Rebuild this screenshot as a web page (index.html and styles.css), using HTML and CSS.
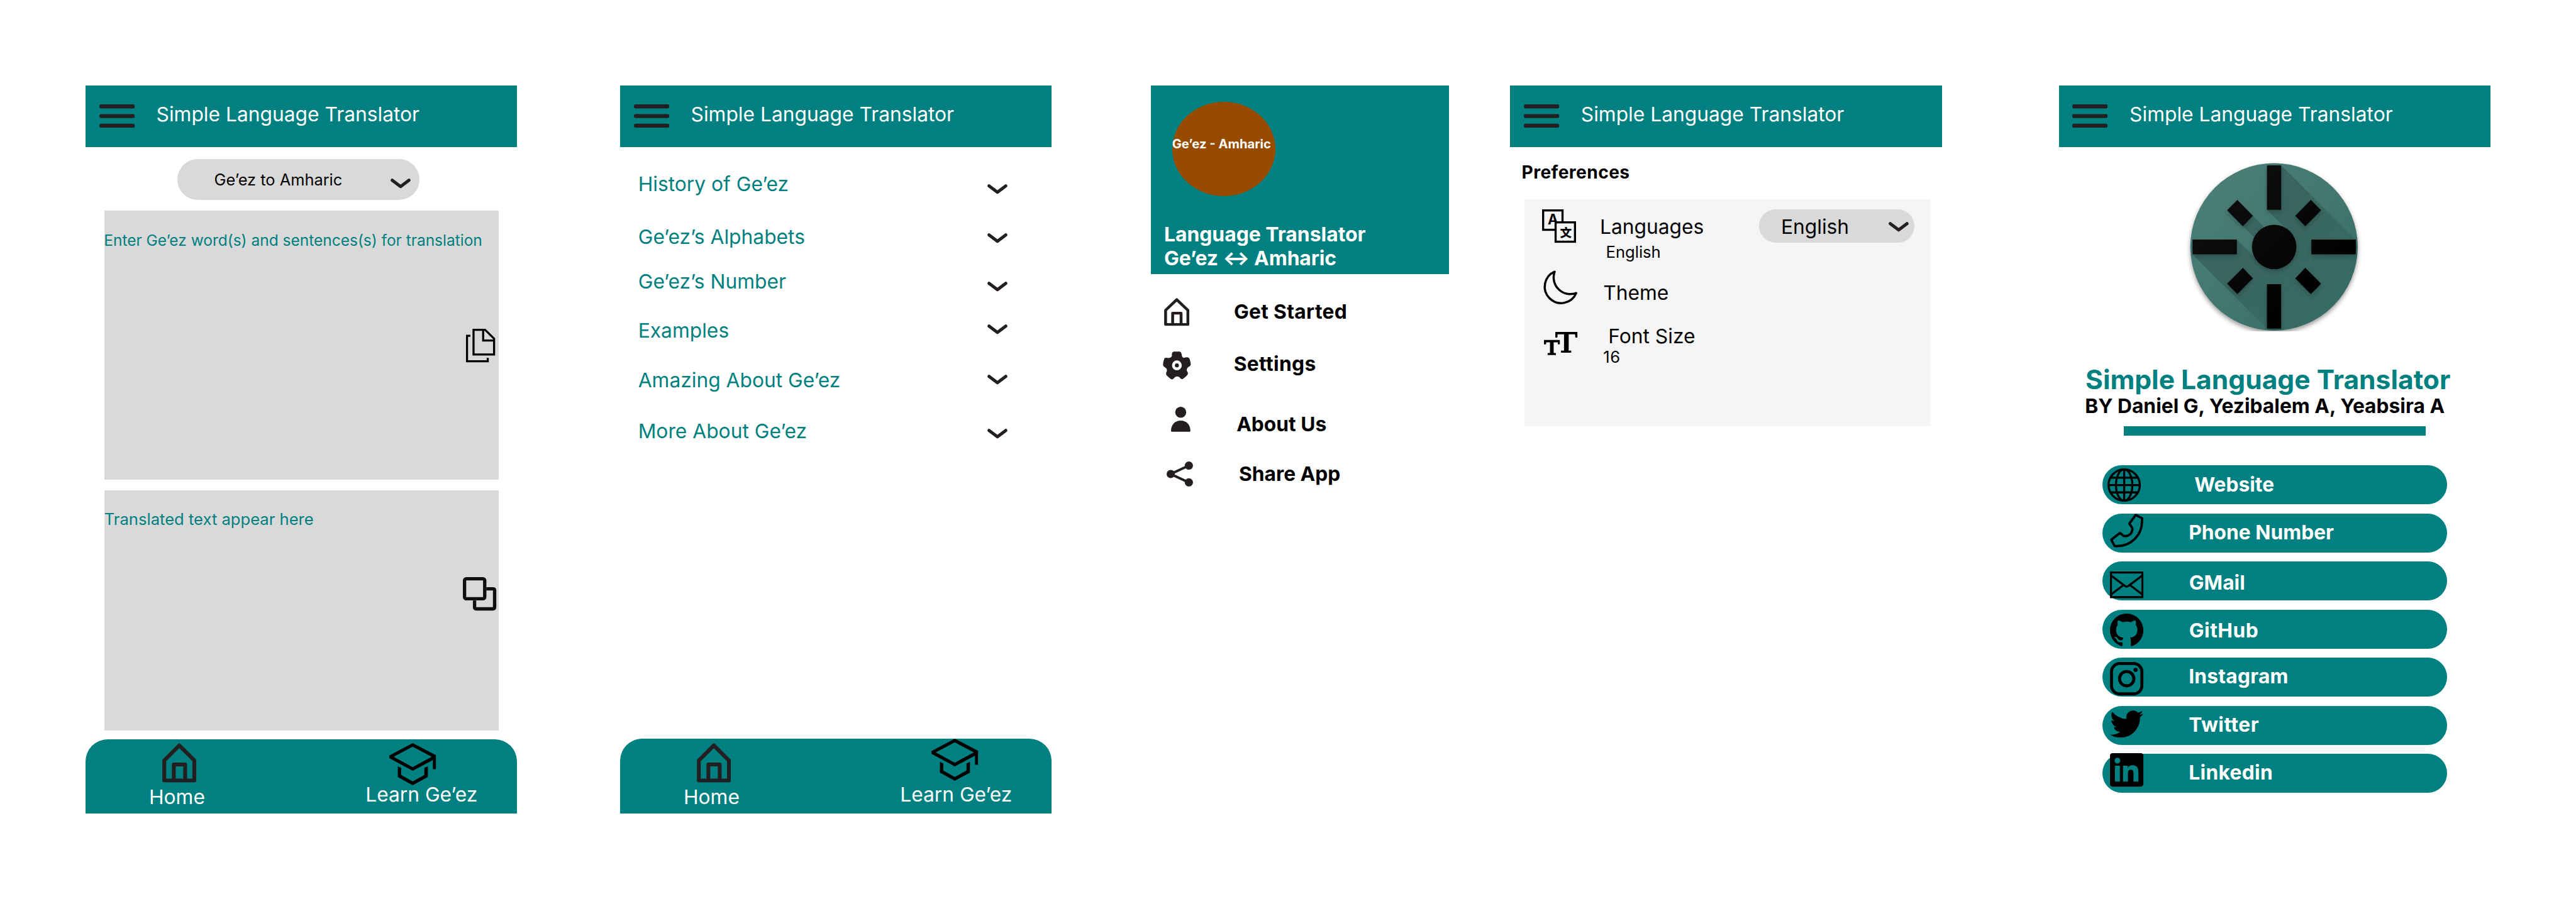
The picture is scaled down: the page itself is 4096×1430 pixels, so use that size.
FILE: index.html
```html
<!DOCTYPE html>
<html lang="en">
<head>
<meta charset="utf-8">
<title>Simple Language Translator</title>
<link rel="stylesheet" href="styles.css">
</head>
<body>
<svg class="defs" aria-hidden="true">
  <symbol id="burger" viewBox="0 0 106 70"><path d="M6 6H100M6 35H100M6 64H100" fill="none" stroke="#231f20" stroke-width="12" stroke-linecap="round"/></symbol>
  <symbol id="chevron" viewBox="0 0 60 30"><path d="M5 5L30 24L55 5" fill="none" stroke="#231f20" stroke-width="9.5" stroke-linecap="round" stroke-linejoin="round"/></symbol>
  <symbol id="home" viewBox="0 0 102 118" preserveAspectRatio="none"><path d="M6 52L51 7L96 52V112H6ZM34.5 112V64H68.500V112" fill="none" stroke="#231f20" stroke-width="11.500" stroke-linejoin="round"/></symbol>
  <symbol id="cap" viewBox="0 0 140 126"><path fill-rule="evenodd" d="M70 0L140 36V78H130.500V51L70 83L0 45V37ZM70 11L13 41L70 72L127 41ZM25.500 69L35.600 74.500V95.600L70 115L105 95.600V74.500L115.400 69V101.500L70 126L25.500 101.500Z"/></symbol>
</svg>
<main class="board">

  <section class="screen">
    <header class="bar">
      <svg class="burger"><use href="#burger"/></svg>
      <h1 class="t bar-title">Simple Language Translator</h1>
    </header>
    <div class="select direction">
      <span class="t direction-label">Ge’ez to Amharic</span>
      <svg class="chevron"><use href="#chevron"/></svg>
    </div>
    <div class="box source">
      <p class="t hint">Enter Ge’ez word(s) and sentences(s) for translation</p>
      <svg class="paste" viewBox="0 0 87 100"><path d="M22.500 3H57L84 29.500V77H22.500ZM51.300 3V35H84M13 21H3V97H65V87" fill="none" stroke="#000" stroke-width="6.200"/></svg>
    </div>
    <div class="box result">
      <p class="t hint">Translated text appear here</p>
      <svg class="copy" viewBox="0 0 100 100"><path d="M70 35H90Q95 35 95 40V90Q95 95 90 95H40Q35 95 35 90V70" fill="none" stroke="#0f0f0f" stroke-width="10"/><rect x="5" y="5" width="60.400" height="59.600" rx="5" fill="none" stroke="#0f0f0f" stroke-width="10"/></svg>
    </div>
    <nav class="tabs">
      <a class="tab-home"><svg class="home"><use href="#home"/></svg><span class="t">Home</span></a>
      <a class="tab-learn"><svg class="cap"><use href="#cap"/></svg><span class="t">Learn Ge’ez</span></a>
    </nav>
  </section>

  <section class="screen learn">
    <header class="bar">
      <svg class="burger"><use href="#burger"/></svg>
      <h1 class="t bar-title">Simple Language Translator</h1>
    </header>
    <ul class="topics">
      <li><span class="t">History of Ge’ez</span><svg class="chevron"><use href="#chevron"/></svg></li>
      <li><span class="t">Ge’ez’s Alphabets</span><svg class="chevron"><use href="#chevron"/></svg></li>
      <li><span class="t">Ge’ez’s Number</span><svg class="chevron"><use href="#chevron"/></svg></li>
      <li><span class="t">Examples</span><svg class="chevron"><use href="#chevron"/></svg></li>
      <li><span class="t">Amazing About Ge’ez</span><svg class="chevron"><use href="#chevron"/></svg></li>
      <li><span class="t">More About Ge’ez</span><svg class="chevron"><use href="#chevron"/></svg></li>
    </ul>
    <nav class="tabs">
      <a class="tab-home"><svg class="home"><use href="#home"/></svg><span class="t">Home</span></a>
      <a class="tab-learn"><svg class="cap"><use href="#cap"/></svg><span class="t">Learn Ge’ez</span></a>
    </nav>
  </section>

  <aside class="drawer">
    <header class="drawer-head">
      <div class="badge"><span class="t">Ge’ez - Amharic</span></div>
      <p class="drawer-title"><span class="t">Language Translator</span><span class="t">Ge’ez ↔ Amharic</span></p>
    </header>
    <ul class="menu">
      <li class="start"><svg class="icon"><use href="#home"/></svg><span class="t">Get Started</span></li>
      <li class="settings"><svg class="icon" viewBox="30 36 252 252"><path fill="#231f20" fill-rule="evenodd" d="M130 37H182Q198 42 200 70Q204 96 222 93Q244 84 263 92Q272 98 281 148Q282 162 270 170Q240 184 245 208Q258 226 254 240Q250 252 208 284Q196 288 188 278Q178 262 158 261Q140 262 130 276Q120 290 106 286Q62 254 59 240Q58 226 66 212Q70 190 52 181Q34 172 31 156Q32 130 44 98Q54 88 80 95Q102 94 111 78Q110 50 116 44Q122 38 130 37ZM156 117A44 44 0 1 0 156 205A44 44 0 1 0 156 117ZM156 143A18 18 0 1 1 156 179A18 18 0 1 1 156 143Z"/></svg><span class="t">Settings</span></li>
      <li class="about"><svg class="icon" viewBox="0 0 58 75"><g fill="#231f20"><circle cx="29" cy="16.500" r="16.500"/><path d="M0 72C0 54 12 41.500 29 41.500S58 54 58 72Q58 75 55 75H3Q0 75 0 72Z"/></g></svg><span class="t">About Us</span></li>
      <li class="share"><svg class="icon" viewBox="0 0 79 75"><path d="M66.600 12.300L12.300 37.700L66.600 63" fill="none" stroke="#231f20" stroke-width="7.500"/><g fill="#231f20"><circle cx="66.600" cy="12.300" r="12.300"/><circle cx="12.300" cy="37.500" r="12.300"/><circle cx="66.600" cy="62.700" r="12.300"/></g></svg><span class="t">Share App</span></li>
    </ul>
  </aside>

  <section class="screen prefs">
    <header class="bar">
      <svg class="burger"><use href="#burger"/></svg>
      <h1 class="t bar-title">Simple Language Translator</h1>
    </header>
    <h2 class="t prefs-title">Preferences</h2>
    <div class="panel">
      <div class="pref languages">
        <svg class="icon" viewBox="0 0 102 100"><rect x="3.200" y="3.200" width="58" height="58" fill="none" stroke="#000" stroke-width="6.300"/><text class="glyph-a" x="32.500" y="45.700" text-anchor="middle">A</text><rect x="40.500" y="38.900" width="58" height="58" fill="#f5f5f5" stroke="#000" stroke-width="6.300"/><text class="glyph-wen" x="71.300" y="82" text-anchor="middle">文</text></svg>
        <div class="pref-text"><span class="t">Languages</span><span class="t small">English</span></div>
        <div class="select language"><span class="t">English</span><svg class="chevron"><use href="#chevron"/></svg></div>
      </div>
      <div class="pref theme">
        <svg class="icon" viewBox="0 0 100 100"><path d="M32 4A49 49 0 1 0 96.500 68A50 50 0 0 1 32 4Z" fill="none" stroke="#000" stroke-width="6.500" stroke-linejoin="round"/></svg>
        <div class="pref-text"><span class="t">Theme</span></div>
      </div>
      <div class="pref fontsize">
        <svg class="icon" viewBox="0 0 100 69"><path d="M34 0H100V17H94L93 7H74V56H81.500V62H51V56H60V7H41L40 17H34ZM0 24H47.500V37H42L41 31H29V63H35.600V69H11V63H18V31H7L6 37H0Z"/></svg>
        <div class="pref-text"><span class="t">Font Size</span><span class="t small">16</span></div>
      </div>
    </div>
  </section>

  <section class="screen about-us">
    <header class="bar">
      <svg class="burger"><use href="#burger"/></svg>
      <h1 class="t bar-title">Simple Language Translator</h1>
    </header>
    <svg class="logo" viewBox="0 0 530 530">
      <defs>
        <linearGradient id="disc" x1="0" y1="0" x2="1" y2="1"><stop offset=".15" stop-color="#4b7d77"/><stop offset=".5" stop-color="#43776f"/><stop offset=".85" stop-color="#396f68"/></linearGradient>
        <linearGradient id="cast" gradientUnits="userSpaceOnUse" x1="90" y1="90" x2="440" y2="440"><stop offset="0" stop-opacity=".2"/><stop offset=".4" stop-opacity=".16"/><stop offset="1" stop-opacity=".04"/></linearGradient>
        <linearGradient id="ink" gradientUnits="userSpaceOnUse" x1="90" y1="90" x2="400" y2="400"><stop offset="0" stop-color="#0f0f0f"/><stop offset="1" stop-color="#000"/></linearGradient>
        <clipPath id="disc-clip"><circle cx="267" cy="264.700" r="250.500"/></clipPath>
        <filter id="lift" x="-10%" y="-10%" width="120%" height="120%" color-interpolation-filters="sRGB"><feDropShadow dx="0" dy="7" stdDeviation="7" flood-color="#000" flood-opacity=".22"/></filter>
        <filter id="edge" filterUnits="userSpaceOnUse" x="0" y="0" width="530" height="517" color-interpolation-filters="sRGB"><feDropShadow dx="0" dy="7" stdDeviation="7" flood-color="#000" flood-opacity=".4"/></filter>
      </defs>
      <circle cx="267" cy="264.700" r="250.500" fill="url(#disc)" filter="url(#edge)"/>
      <g clip-path="url(#disc-clip)">
        <path fill="url(#cast)" d="M288.400 20.600L788.400 520.600L745.800 653.900L245.800 153.900ZM155.500 243L655.500 743L523 787L23 287ZM203.800 171.700L703.800 671.700L673.800 703.200L173.800 203.200ZM314 218L814 718L720 812L220 312Z"/>
        <g fill="url(#ink)" filter="url(#lift)">
          <path d="M245.800 20.600H288.400V154H245.800ZM245.800 376.300H288.400V509.500H245.800ZM23 243H155.700V287H23ZM378.600 243H511.800V287H378.600Z"/>
          <path d="M157.200 124.400L203.800 171.700L173.800 203.200L126.400 155.500ZM377.200 124.400L330.600 171.700L360.600 203.200L408 155.500ZM157.200 406.200L203.800 358.900L173.800 327.400L126.400 375.100ZM377.200 406.200L330.600 358.900L360.600 327.400L408 375.100Z"/>
          <circle cx="267.500" cy="265" r="66.500"/>
        </g>
      </g>
    </svg>
    <h2 class="t app-name">Simple Language Translator</h2>
    <p class="t authors">BY Daniel G, Yezibalem A, Yeabsira A</p>
    <hr class="rule">
    <ul class="links">
      <li class="website"><svg class="icon" viewBox="0 0 100 100"><g fill="none" stroke="#000" stroke-width="6.200"><circle cx="50" cy="50" r="46.800"/><ellipse cx="50" cy="50" rx="24.500" ry="46.800"/><path d="M50 3V97M3 50H97M10 28H90M10 72H90"/></g></svg><span class="t">Website</span></li>
      <li class="phone"><svg class="icon" viewBox="0 0 100 101"><path d="M77 4L96 14V22C96 66 62 97 22 97H14L4 78L30 58L41 67H48C60 66 68 56 67 43L58 30Z" fill="none" stroke="#000" stroke-width="7" stroke-linejoin="round"/></svg><span class="t">Phone Number</span></li>
      <li class="gmail"><svg class="icon" viewBox="0 0 100 80"><path d="M3 3H97V77H3ZM3 12L45 43.500Q50 47.500 55 43.500L97 12M3 69L40 41M97 69L60 41" fill="none" stroke="#000" stroke-width="6"/></svg><span class="t">GMail</span></li>
      <li class="github"><svg class="icon" viewBox="0 0 16 16"><path d="M8 0C3.580 0 0 3.580 0 8c0 3.540 2.290 6.530 5.470 7.590.4.070.55-.17.55-.38 0-.19-.01-.82-.01-1.490-2.010.37-2.530-.49-2.690-.94-.09-.23-.48-.94-.82-1.130-.28-.15-.68-.52-.01-.53.63-.01 1.080.58 1.230.82.72 1.210 1.870.87 2.330.66.07-.52.28-.87.51-1.070-1.780-.2-3.640-.89-3.640-3.950 0-.87.31-1.590.82-2.150-.08-.2-.36-1.020.08-2.120 0 0 .67-.21 2.200.82.64-.18 1.320-.27 2-.27.68 0 1.360.09 2 .27 1.530-1.040 2.200-.82 2.200-.82.44 1.100.16 1.920.08 2.120.51.56.82 1.270.82 2.150 0 3.070-1.870 3.750-3.650 3.950.29.25.54.73.54 1.480 0 1.070-.01 1.930-.01 2.200 0 .21.15.46.55.38A8.013 8.013 0 0 0 16 8c0-4.420-3.580-8-8-8z"/></svg><span class="t">GitHub</span></li>
      <li class="instagram"><svg class="icon" viewBox="0 0 100 100"><rect x="4.500" y="4.500" width="91" height="91" rx="25" fill="none" stroke="#000" stroke-width="9"/><circle cx="50" cy="50" r="21.500" fill="none" stroke="#000" stroke-width="9"/><circle cx="76.600" cy="23.400" r="6.200"/></svg><span class="t">Instagram</span></li>
      <li class="twitter"><svg class="icon" viewBox="0 2 16 13"><path d="M5.026 15c6.038 0 9.341-5.003 9.341-9.334 0-.14 0-.282-.006-.422A6.685 6.685 0 0 0 16 3.542a6.658 6.658 0 0 1-1.889.518 3.301 3.301 0 0 0 1.447-1.817 6.533 6.533 0 0 1-2.087.793A3.286 3.286 0 0 0 7.875 6.030a9.325 9.325 0 0 1-6.767-3.429 3.289 3.289 0 0 0 1.018 4.382A3.323 3.323 0 0 1 .64 6.575v.045a3.288 3.288 0 0 0 2.632 3.218 3.203 3.203 0 0 1-.865.115 3.230 3.230 0 0 1-.614-.057 3.283 3.283 0 0 0 3.067 2.277A6.588 6.588 0 0 1 .78 13.580a6.320 6.320 0 0 1-.78-.045A9.344 9.344 0 0 0 5.026 15z"/></svg><span class="t">Twitter</span></li>
      <li class="linkedin"><svg class="icon" viewBox="0 0 24 24"><path d="M20.447 20.452h-3.554v-5.569c0-1.328-.027-3.037-1.852-3.037-1.853 0-2.136 1.445-2.136 2.939v5.667H9.351V9h3.414v1.561h.046c.477-.9 1.637-1.850 3.370-1.850 3.601 0 4.267 2.370 4.267 5.455v6.286zM5.337 7.433c-1.144 0-2.063-.926-2.063-2.065 0-1.138.92-2.063 2.063-2.063 1.140 0 2.064.925 2.064 2.063 0 1.139-.925 2.065-2.064 2.065zm1.782 13.019H3.555V9h3.564v11.452zM22.225 0H1.771C.792 0 0 .774 0 1.729v20.542C0 23.227.792 24 1.771 24h20.451C23.200 24 24 23.227 24 22.271V1.729C24 .774 23.200 0 22.222 0h.003z"/></svg><span class="t">Linkedin</span></li>
    </ul>
  </section>
</main>
</body>
</html>
```
FILE: styles.css
```css
/* 1rem is 100 design units; the board is 77.1rem by 26.92rem */
html { font-size: 53.126px; }
body { margin: 0; background: #fff; color: #000; font-family: Inter, "Noto Sans", sans-serif; }
h1, h2, p, ul { margin: 0; padding: 0; font-weight: 400; }
ul { list-style: none; }
svg { display: block; flex: none; overflow: visible; }
.defs { position: absolute; width: 0; height: 0; }

.board { display: flex; align-items: flex-start; box-sizing: border-box; width: 77.1rem; height: 26.91rem; padding: 2.56rem 0 0 2.56rem; overflow: hidden; }
.screen { display: flex; flex-direction: column; flex: none; width: 12.92rem; height: 21.8rem; }
.learn { margin-left: 3.08rem; }
.drawer { flex: none; width: 8.92rem; margin-left: 2.96rem; }
.prefs { margin-left: 1.84rem; }
.about-us { margin-left: 3.5rem; }

.t { font-size: .598rem; line-height: 1; white-space: nowrap; }

/* top bar shared by the full screens */
.bar { display: flex; flex: none; height: 1.84rem; background: #008080; color: #fff; }
.burger { width: 1.06rem; height: .7rem; margin: .57rem 0 0 .408rem; }
.bar-title { margin: .57rem 0 0 .65rem; }
.chevron { width: .6rem; height: .3rem; }
.select { display: flex; justify-content: space-between; box-sizing: border-box; background: #d9d9d9; }

/* translate screen */
.direction { width: 7.26rem; height: 1.22rem; margin: .36rem 0 0 2.74rem; padding: .38rem .27rem 0 1.11rem; border-radius: .61rem; }
.direction-label { font-size: .478rem; }
.direction .chevron { margin-top: .21rem; }
.box { display: flex; justify-content: space-between; width: 11.8rem; margin: .32rem 0 0 .56rem; background: #d9d9d9; color: #008080; }
.source { height: 8.06rem; }
.result { height: 7.2rem; }
.hint { width: 9rem; font-size: .461rem; margin-top: .665rem; margin-left: -.01rem; }
.result .hint { font-size: .482rem; margin-top: .615rem; margin-left: 0; }
.paste { width: .87rem; height: 1rem; margin: 3.54rem .11rem 0 0; }
.copy { width: 1rem; height: 1rem; margin: 2.6rem .06rem 0 0; }

/* bottom tabs */
.tabs { display: flex; flex: none; height: 2.22rem; margin-top: auto; border-radius: .66rem .66rem 0 0; background: #008080; color: #fff; }
.learn .tabs { height: 2.24rem; }
.tabs a { display: flex; flex-direction: column; align-items: flex-start; }
.tab-home { width: 6.52rem; margin-left: 1.9rem; }
.home { width: 1.02rem; height: 1.18rem; margin: .11rem 0 .14rem .39rem; }
.learn .home { margin-top: .13rem; }
.cap { width: 1.4rem; height: 1.26rem; margin: .1rem 0 0 .68rem; }
.learn .cap { margin: 0 0 .12rem .9rem; }
.tab-learn .t { margin-left: -.04rem; }

/* learn screen */
.topics { margin-top: .816rem; }
.topics li { display: flex; justify-content: space-between; padding: 0 1.33rem 0 .54rem; color: #008080; }
.topics li:nth-child(1) { height: 1.58rem; }
.topics li:nth-child(2) { height: 1.34rem; }
.topics li:nth-child(3) { height: 1.46rem; }
.topics li:nth-child(4) { height: 1.5rem; }
.topics li:nth-child(5) { height: 1.52rem; }
.topics li:nth-child(6) { height: 1rem; }
.topics .chevron { margin-top: .12rem; }
.topics li:nth-child(1) .chevron, .topics li:nth-child(3) .chevron { margin-top: .3rem; }
.topics li:nth-child(2) .chevron { margin-top: .185rem; }
.topics li:nth-child(6) .chevron { margin-top: .22rem; }

/* side drawer */
.drawer .t { font-weight: 700; }
.drawer-head { display: flex; flex-direction: column; height: 5.64rem; background: #008080; color: #fff; }
.badge { display: flex; width: 3.09rem; height: 2.84rem; margin: .48rem 0 0 .64rem; border-radius: 50%; background: #964b00; }
.drawer .badge .t { font-size: .38rem; margin-top: 1.085rem; }
.drawer-title { display: flex; flex-direction: column; margin: .834rem 0 0 .4rem; gap: .12rem; }
.drawer-title .t { font-size: .6rem; }
.drawer-title .t + .t { letter-spacing: -.003rem; }
.menu { margin-top: .72rem; }
.menu li { display: grid; grid-template-columns: 2.5rem 1fr; align-items: start; height: 1.65rem; }
.start .icon { width: .757rem; height: .837rem; margin-left: .4rem; }
.settings .icon { width: .84rem; height: .84rem; margin-left: .365rem; }
.about .icon { width: .58rem; height: .75rem; margin-left: .61rem; }
.share .icon { width: .79rem; height: .75rem; margin-left: .485rem; }
.menu .start { height: 1.6rem; }
.menu .settings { height: 1.666rem; }
.menu .about { height: 1.634rem; }
.start .t { margin: .116rem 0 0 -.01rem; letter-spacing: .006rem; }
.settings .t { margin: .076rem 0 0 -.015rem; letter-spacing: .007rem; }
.about .t { margin: .21rem 0 0 .07rem; }
.share .t { margin: .076rem 0 0 .143rem; }

/* preferences screen */
.prefs-title { font-size: .53rem; font-weight: 700; letter-spacing: .008rem; margin: .5rem 0 0 .345rem; }
.panel { width: 12.16rem; height: 6.8rem; margin: .532rem 0 0 .436rem; background: #f5f5f5; }
.pref { display: grid; grid-template-columns: 2.25rem 4.77rem 4.65rem; align-items: start; }
.pref-text { display: flex; flex-direction: column; align-items: flex-start; }
.t.small { font-size: .482rem; }
.languages { height: 2.13rem; padding-top: .3rem; box-sizing: border-box; }
.languages .icon { width: 1.02rem; height: 1rem; margin-left: .524rem; }
.glyph-a { font: 700 42px Inter, sans-serif; }
.glyph-wen { font: 900 35px "Noto Sans CJK SC", sans-serif; }
.languages .pref-text { margin-top: .23rem; }
.languages .small { margin: .22rem 0 0 .18rem; }
.language { height: 1rem; padding: .23rem .18rem 0 .65rem; border-radius: .5rem; }
.language .chevron { margin-top: .15rem; }
.theme { height: 1.84rem; }
.theme .icon { width: 1rem; height: 1rem; margin-left: .58rem; }
.theme .t { margin-top: .38rem; margin-left: .1rem; }
.fontsize .icon { width: 1rem; height: .69rem; margin-left: .58rem; }
.fontsize .t { margin-top: -.16rem; margin-left: .25rem; }
.fontsize .small { margin-top: .08rem; margin-left: .1rem; letter-spacing: .01rem; }

/* about screen */
.logo { width: 5.3rem; height: 5.3rem; margin: .35rem 0 0 3.78rem; }
.app-name { font-size: .801rem; font-weight: 700; color: #008080; margin: .92rem 0 0 .8rem; }
.authors { font-weight: 700; margin: .095rem 0 0 .785rem; }
.rule { flex: none; width: 9.04rem; height: .28rem; margin: .296rem 0 0 1.94rem; border: 0; background: #008080; }
.links { display: flex; flex-direction: column; gap: .28rem; margin: .897rem 0 0 1.3rem; }
.links li { display: grid; grid-template-columns: 2.6rem 1fr; align-items: start; width: 10.32rem; height: 1.16rem; border-radius: .58rem; background: #008080; color: #fff; }
.links .icon { width: 1rem; height: 1rem; margin: .11rem 0 0 .24rem; }
.links .t { font-weight: 700; margin: .26rem 0 0 -.01rem; }
.links .website .icon { margin: .085rem 0 0 .16rem; }
.links .website .t { margin: .28rem 0 0 .158rem; }
.links .phone .icon { height: 1.01rem; margin-top: 0; }
.links .gmail .icon { height: .8rem; margin-top: .3rem; }
.links .gmail .t { margin: .334rem 0 0; }
.links .github .t { margin: .319rem 0 0; letter-spacing: .009rem; }
.links .instagram .icon { margin-top: .12rem; }
.links .instagram .t { letter-spacing: .004rem; }
.links .twitter .icon { height: .82rem; margin-top: .14rem; }
.links .twitter .t { letter-spacing: .009rem; }
.links .linkedin .icon { margin-top: -.03rem; }
.links .linkedin .t { letter-spacing: .006rem; }
```
